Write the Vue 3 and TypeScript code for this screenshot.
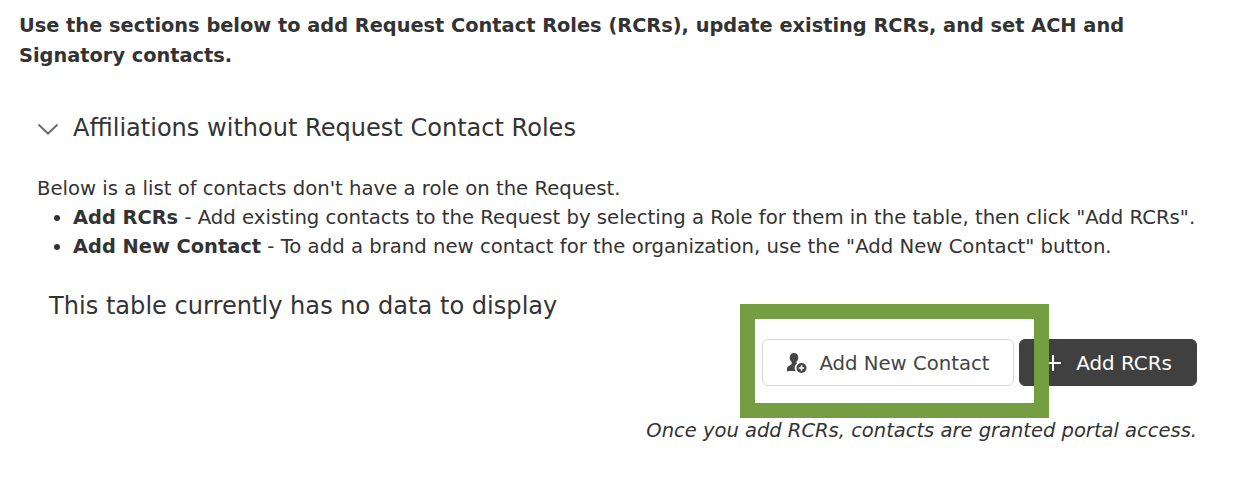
<script setup lang="ts">
const items = [
  { label: 'Add RCRs', text: ' - Add existing contacts to the Request by selecting a Role for them in the table, then click "Add RCRs".' },
  { label: 'Add New Contact', text: ' - To add a brand new contact for the organization, use the "Add New Contact" button.' },
]
</script>

<template>
  <main class="page">
    <p class="intro">Use the sections below to add Request Contact Roles (RCRs), update existing RCRs, and set ACH and Signatory contacts.</p>
    <section class="section">
      <header class="head">
        <svg class="chev" width="22" height="12" viewBox="0 0 22 12"><path d="M1.5 1.500 11 10.500 20.500 1.500" fill="none" stroke="#706e6b" stroke-width="2"/></svg>
        <h2>Affiliations without Request Contact Roles</h2>
      </header>
      <p class="lead">Below is a list of contacts don't have a role on the Request.</p>
      <ul class="list">
        <li v-for="item in items" :key="item.label"><b>{{ item.label }}</b>{{ item.text }}</li>
      </ul>
      <p class="empty">This table currently has no data to display</p>
      <div class="actions">
        <button class="btn light" type="button">
          <svg width="22" height="22" viewBox="0 0 22 22"><path fill="#444" d="M8 1a4.300 4.300 0 0 1 4.300 4.500c0 1.800-.8 3.300-1.900 4.200-.2.600 0 1.100.8 1.600a6 6 0 0 0-1.700 7.700H2.500C1.500 20 1 19.500 1 18.600v-1.900c0-1.400 1-2.400 2.600-3.200 1-.5 1.900-1.100 2.100-2 .1-.5 0-1-.2-1.700C4.500 8.900 3.700 7.400 3.700 5.500A4.300 4.300 0 0 1 8 1z"/><circle cx="15.500" cy="16" r="5" fill="#444"/><path d="M12.800 16h5.400M15.500 13.300v5.400" stroke="#fff" stroke-width="1.500"/></svg>
          <span>Add New Contact</span>
        </button>
        <button class="btn dark" type="button">
          <svg width="16" height="18" viewBox="0 0 16 18"><path d="M8 1v16M0 9h16" stroke="#fff" stroke-width="2"/></svg>
          <span>Add RCRs</span>
        </button>
        <div class="highlight"></div>
      </div>
      <p class="note">Once you add RCRs, contacts are granted portal access.</p>
    </section>
  </main>
</template>

<style>
html, body { margin: 0; background: #fff; }
</style>

<style scoped>
.page {
  width: 1238px;
  height: 496px;
  box-sizing: border-box;
  padding: 11px 41px 0 19px;
  font-family: "DejaVu Sans", Verdana, sans-serif;
  color: #333;
  overflow: hidden;
}
.intro {
  margin: 0;
  font-size: 19.370px;
  font-weight: 700;
  line-height: 30px;
  width: 1120px;
}
.section { margin-top: 41px; padding-left: 18px; }
.head { display: flex; align-items: center; gap: 14px; }
.chev { margin-top: 2px; }
h2 { margin: 0; font-size: 24.050px; font-weight: 400; line-height: 32px; color: #333; }
.lead { margin: 30px 0 0; font-size: 19.650px; line-height: 29px; }
.list { margin: 0; padding: 0 0 0 36px; font-size: 19.680px; line-height: 29px; }
.list b { font-size: 19.400px; }
.empty { margin: 29px 0 0 12px; font-size: 24.100px; line-height: 32px; }
.actions {
  position: relative;
  display: flex;
  justify-content: flex-end;
  gap: 5px;
  margin-top: 17px;
}
.btn {
  display: flex;
  align-items: center;
  justify-content: center;
  height: 47px;
  box-sizing: border-box;
  border-radius: 6px;
  font-family: inherit;
  font-size: 19.700px;
  padding: 0;
}
.btn span { position: relative; top: 1px; }
.light { width: 252px; gap: 11px; background: #fff; border: 1px solid #d8d8d8; color: #444; }
.dark { width: 178px; gap: 15px; padding-left: 1px; font-size: 19.900px; background: #404040; border: 1px solid #404040; color: #fff; }
.highlight {
  position: absolute;
  left: 703px;
  top: -35px;
  width: 309px;
  height: 114px;
  box-sizing: border-box;
  border: 15px solid #759e43;
}
.note { margin: 33px 0 0; text-align: right; font-size: 19.500px; font-style: italic; line-height: 24px; }
</style>
